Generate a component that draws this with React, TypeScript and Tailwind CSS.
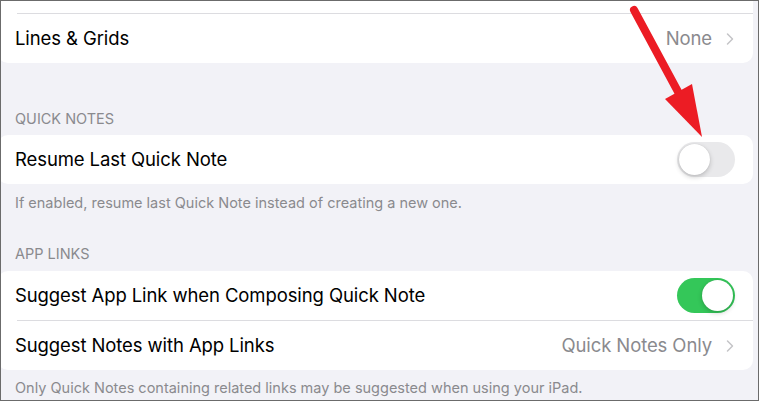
import { ChevronRight } from 'lucide-react';

function Toggle({ on }: { on: boolean }) {
  return (
    <div
      className={`relative w-[58px] h-[35px] rounded-full shrink-0 ${on ? 'bg-[#34c759]' : 'bg-[#e9e9eb]'}`}
    >
      <div
        className={`absolute top-[2px] w-[31px] h-[31px] rounded-full bg-white shadow-[0_2px_5px_rgba(0,0,0,0.2),0_0_1px_rgba(0,0,0,0.15)] ${on ? 'right-[2px]' : 'left-[2px]'}`}
      />
    </div>
  );
}

function Row({ label, children }: { label: string; children?: React.ReactNode }) {
  return (
    <div className="h-[49px] flex items-center justify-between pl-[17px] pr-[18px]">
      <span className="text-[18.5px] text-black tracking-[-0.1px]">{label}</span>
      {children}
    </div>
  );
}

function Value({ text }: { text: string }) {
  return (
    <div className="flex items-center gap-[8px] text-[#8a8a8e]">
      <span className="text-[18.5px] tracking-[-0.1px]">{text}</span>
      <ChevronRight className="w-[20px] h-[22px] -mr-[5px] text-[#c4c4c7]" strokeWidth={1.8} />
    </div>
  );
}

function Separator() {
  return <div className="ml-[19px] h-px bg-[#dcdce0]" />;
}

export default function App() {
  return (
    <div
      className="relative w-[759px] h-[401px] overflow-hidden border border-[#6b6b6b] bg-[#f2f2f7]"
      style={{ fontFamily: 'Inter, "Noto Sans", sans-serif' }}
    >
      <div className="flex flex-col pr-[5px] -ml-[3px]">
        {/* Display card */}
        <div className="bg-white rounded-b-[10px]">
          <div className="h-[12px]" />
          <Separator />
          <Row label="Lines & Grids">
            <Value text="None" />
          </Row>
        </div>

        {/* Quick Notes */}
        <div className="pl-[17px] pb-[8px] h-[72px] flex items-end text-[14.5px] text-[#8a8a8e] leading-[16px]">
          QUICK NOTES
        </div>
        <div className="bg-white rounded-[10px]">
          <Row label="Resume Last Quick Note">
            <Toggle on={false} />
          </Row>
        </div>
        <div className="pl-[17px] pt-[11px] text-[14.5px] text-[#8a8a8e] leading-[16px]">
          If enabled, resume last Quick Note instead of creating a new one.
        </div>

        {/* App Links */}
        <div className="pl-[17px] pt-[35px] pb-[9px] text-[14.5px] text-[#8a8a8e] leading-[16px]">
          APP LINKS
        </div>
        <div className="bg-white rounded-[10px]">
          <Row label="Suggest App Link when Composing Quick Note">
            <Toggle on={true} />
          </Row>
          <Separator />
          <Row label="Suggest Notes with App Links">
            <Value text="Quick Notes Only" />
          </Row>
        </div>
        <div className="pl-[17px] pt-[10px] text-[14.5px] text-[#8a8a8e] leading-[16px]">
          Only Quick Notes containing related links may be suggested when using your iPad.
        </div>
      </div>

      {/* Red annotation arrow */}
      <svg className="absolute left-0 top-0 pointer-events-none" width="759" height="401" viewBox="-1 -1 759 401">
        <line x1="632" y1="8" x2="681" y2="99" stroke="#ec1c24" strokeWidth="8" strokeLinecap="round" />
        <polygon points="700,135 663,97 690,82" fill="#ec1c24" />
      </svg>
    </div>
  );
}
